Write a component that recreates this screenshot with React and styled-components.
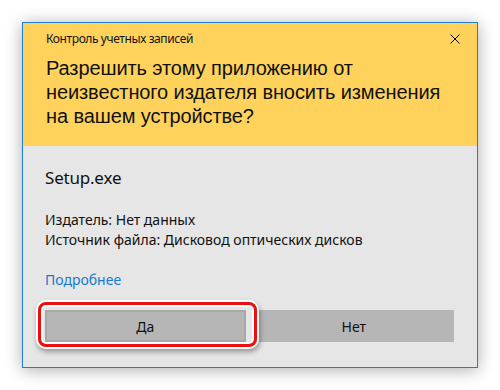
import styled, { createGlobalStyle } from "styled-components";

const GlobalStyle = createGlobalStyle`
	html, body {
		margin: 0;
		padding: 0;
		background: #ffffff;
	}
	body {
		font-family: "Segoe UI", "Noto Sans", "Liberation Sans", sans-serif;
		color: #000;
	}
`;

function App() {
	return (
		<>
			<GlobalStyle />
			<S.Page>
				<S.Window>
					<S.Header>
						<S.TitleRow>
							<S.Caption>Контроль учетных записей</S.Caption>
							<S.Close aria-label="Закрыть">
								<svg width="10" height="10" viewBox="0 0 10 10">
									<path d="M0.5 0.5 L9.5 9.5 M9.5 0.5 L0.5 9.5" stroke="#000" strokeWidth="1" />
								</svg>
							</S.Close>
						</S.TitleRow>
						<S.Question>
							<S.QuestionLine>Разрешить этому приложению от</S.QuestionLine>
							<S.QuestionLine>неизвестного издателя вносить изменения</S.QuestionLine>
							<S.QuestionLine>на вашем устройстве?</S.QuestionLine>
						</S.Question>
					</S.Header>
					<S.Body>
						<S.AppName>Setup.exe</S.AppName>
						<S.Details>
							<S.Line>Издатель: Нет данных</S.Line>
							<S.Line>Источник файла: Дисковод оптических дисков</S.Line>
						</S.Details>
						<S.More href="#">Подробнее</S.More>
						<S.Buttons>
							<S.ButtonSlot>
								<S.Button>Да</S.Button>
								<S.Highlight />
							</S.ButtonSlot>
							<S.ButtonSlot>
								<S.Button $plain>Нет</S.Button>
							</S.ButtonSlot>
						</S.Buttons>
					</S.Body>
				</S.Window>
			</S.Page>
		</>
	);
}

export default App;

const Page = styled.div`
	width: 500px;
	height: 390px;
	box-sizing: border-box;
	padding: 22px 0 0 22px;
`;

const Window = styled.div`
	width: 456px;
	height: 346px;
	box-sizing: border-box;
	border: 1px solid #1b7fd3;
	background: #e6e6e6;
	box-shadow: 0 2px 16px rgba(0, 0, 0, 0.32);
	display: flex;
	flex-direction: column;
`;

const Header = styled.div`
	background: #ffd35b;
	height: 123px;
	box-sizing: border-box;
	padding: 8px 0 0 23px;
`;

const TitleRow = styled.div`
	display: flex;
	justify-content: space-between;
	align-items: center;
	height: 16px;
	padding-right: 17px;
`;

const Caption = styled.div`
	font-size: 12px;
	line-height: 16px;
	letter-spacing: -0.4px;
	color: #111;
`;

const Close = styled.div`
	width: 10px;
	height: 10px;
	display: flex;
`;

const Question = styled.div`
	margin-top: 9px;
	display: flex;
	flex-direction: column;
`;

const QuestionLine = styled.div`
	font-family: "Segoe UI", "Liberation Sans", sans-serif;
	font-size: 20px;
	line-height: 24px;
	height: 24px;
	letter-spacing: -0.1px;
	color: #111;
	white-space: nowrap;
`;

const Body = styled.div`
	flex: 1;
	padding: 20px 23px 0 22px;
	display: flex;
	flex-direction: column;
`;

const AppName = styled.div`
	font-size: 17px;
	line-height: 24px;
	letter-spacing: -0.2px;
	color: #111;
`;

const Details = styled.div`
	margin-top: 20px;
	display: flex;
	flex-direction: column;
`;

const Line = styled.div`
	font-size: 14px;
	line-height: 20px;
	color: #111;
`;

const More = styled.a`
	margin-top: 20px;
	font-size: 14px;
	line-height: 20px;
	color: #1a78cf;
	text-decoration: none;
	align-self: flex-start;
`;

const Buttons = styled.div`
	margin-top: 20px;
	display: grid;
	grid-template-columns: 1fr 1fr;
	gap: 8px;
`;

const ButtonSlot = styled.div`
	position: relative;
`;

const Button = styled.button`
	width: 100%;
	height: 32px;
	border: 2px solid ${(p) => (p.$plain ? "#b6b6b6" : "#a8a8a8")};
	background: #b6b6b6;
	font-family: inherit;
	font-size: 14px;
	color: #111;
	padding: 0;
`;

const Highlight = styled.div`
	position: absolute;
	left: -7px;
	right: -11px;
	top: -8px;
	bottom: -5px;
	border: 3px solid #ec1111;
	border-radius: 8px;
	box-shadow: inset 0 0 0 2px #ffffff, 0 0 0 2px #ffffff, 1px 3px 5px 2px rgba(0, 0, 0, 0.35);
	pointer-events: none;
	z-index: 2;
`;

const S = {
	Page,
	Window,
	Header,
	TitleRow,
	Caption,
	Close,
	Question,
	QuestionLine,
	Body,
	AppName,
	Details,
	Line,
	More,
	Buttons,
	ButtonSlot,
	Button,
	Highlight,
};
